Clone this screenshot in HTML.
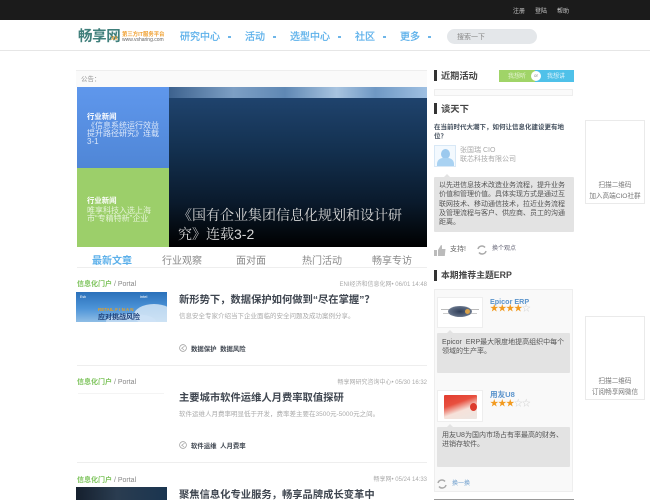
<!DOCTYPE html>
<html lang="zh">
<head>
<meta charset="utf-8">
<style>
html,body{margin:0;padding:0;background:#fff}
body{width:650px;height:500px;overflow:hidden;position:relative;font-family:"Liberation Sans","Noto Sans CJK SC",sans-serif;color:#444}
#w{position:absolute;left:0;top:0;width:650px;height:500px;overflow:hidden;filter:blur(.3px)}
.a,.t{position:absolute}
.t{white-space:nowrap;line-height:1}
.h{background:#333;width:3px;height:11px;position:absolute}
.nav{color:#5cb0ea;font-size:10px;font-weight:400;-webkit-text-stroke:.25px #5cb0ea}
.dot{position:absolute;width:3px;height:2px;background:#6db5e8;top:36px}
.tab{font-size:10px;color:#8a8a8a;top:257px}
.cat{font-size:7px;color:#7cc35a;font-weight:700}
.cat span{color:#888;font-weight:400}
.src{font-size:6px;color:#aaa;text-align:right;right:223px}
.ttl{font-size:10.3px;font-weight:700;color:#3f4650}
.sub{font-size:6.5px;color:#aaa}
.tag{font-size:6.4px;color:#3f4650;font-weight:700}
.ln{position:absolute;left:77px;width:350px;height:1px;background:#eee}
.qr{position:absolute;left:585px;width:58px;height:82px;border:1px solid #eaeaea;background:#fff;box-sizing:content-box}
.gr{position:absolute;background:#e3e3e3;border-radius:1px}
.p{font-size:7px;line-height:9.3px;color:#555;position:absolute;white-space:nowrap}
.q{left:585px;width:60px;text-align:center;font-size:6.6px;color:#777}
.s{font-size:8.5px;letter-spacing:-.5px;color:#f29a1f}
</style>
</head>
<body>
<div id="w">
<div class="a" style="left:0;top:0;width:650px;height:20px;background:#1b1b1b"></div>
<div class="a" style="left:0;top:50px;width:650px;height:1px;background:#e6e6e6"></div>
<div class="t" style="left:513px;top:8.5px;font-size:6px;color:#ccc">注册</div>
<div class="t" style="left:535px;top:8.5px;font-size:6px;color:#ccc">登陆</div>
<div class="t" style="left:557px;top:8.5px;font-size:6px;color:#ccc">帮助</div>

<div class="t" style="left:78px;top:29.5px;font-size:14.5px;color:#3f7f7b;font-weight:700;letter-spacing:-.4px">畅享网</div>
<div class="t" style="left:111px;top:37px;font-size:5px;color:#f0a030;font-weight:700">XX</div>
<div class="t" style="left:122px;top:32.5px;font-size:5.4px;color:#f0a030;font-weight:700">第三方IT服务平台</div>
<div class="t" style="left:122px;top:38px;font-size:5px;color:#666">www.vsharing.com</div>

<div class="t nav" style="left:180px;top:33px">研究中心</div><div class="dot" style="left:228px"></div>
<div class="t nav" style="left:245px;top:33px">活动</div><div class="dot" style="left:273px"></div>
<div class="t nav" style="left:290px;top:33px">选型中心</div><div class="dot" style="left:338px"></div>
<div class="t nav" style="left:355px;top:33px">社区</div><div class="dot" style="left:383px"></div>
<div class="t nav" style="left:400px;top:33px">更多</div><div class="dot" style="left:428px"></div>
<div class="a" style="left:447px;top:29px;width:90px;height:15px;border-radius:8px;background:#e4e7ea"></div>
<div class="t" style="left:457px;top:34px;font-size:7px;color:#888">搜索一下</div>

<div class="a" style="left:76px;top:70px;width:351px;height:17px;background:#fafafa;border-top:1px solid #eee;box-sizing:border-box"></div>
<div class="t" style="left:81px;top:77px;font-size:6.5px;color:#999">公告：</div>

<div class="a" style="left:77px;top:87px;width:92px;height:81px;background:linear-gradient(#5f97ec,#4f86d6)"></div>
<div class="a" style="left:77px;top:168px;width:92px;height:79px;background:#9ccf6a"></div>
<div class="t" style="left:87px;top:113px;font-size:7.4px;color:#fff;font-weight:700">行业新闻</div>
<div class="t" style="left:87px;top:121.5px;font-size:8px;line-height:8px;color:#dce8fa;white-space:nowrap">《信息系统运行效益<br>提升路径研究》连载<br>3-1</div>
<div class="t" style="left:87px;top:197px;font-size:7.4px;color:#fff;font-weight:700">行业新闻</div>
<div class="t" style="left:87px;top:206.5px;font-size:8px;line-height:8px;color:#e6f4d8;white-space:nowrap">唯享科技入选上海<br>市“专精特新”企业</div>

<div class="a" style="left:169px;top:87px;width:258px;height:11px;background:linear-gradient(90deg,#3d628e,#7d9fc4 25%,#5f88b4 45%,#a8c4e0 65%,#6f98c4 80%,#9fc0e2)"></div>
<div class="a" style="left:169px;top:98px;width:258px;height:149px;background:linear-gradient(#1f436d,#13304f 35%,#0a1a2c 70%,#000)"></div>
<div class="t" style="left:178px;top:205.5px;width:236px;white-space:normal;font-size:14px;line-height:19px;color:#d8d8d8;font-family:'Liberation Sans','Noto Serif CJK SC',serif">《国有企业集团信息化规划和设计研究》连载3-2</div>

<div class="t tab" style="left:92px;color:#5cb0ea;font-weight:700">最新文章</div>
<div class="t tab" style="left:162px">行业观察</div>
<div class="t tab" style="left:236px">面对面</div>
<div class="t tab" style="left:302px">热门活动</div>
<div class="t tab" style="left:372px">畅享专访</div>
<div class="ln" style="top:267px"></div>

<div class="t cat" style="left:77px;top:281px">信息化门户 <span>/ Portal</span></div>
<div class="t src" style="top:282px">ENI经济和信息化网• 06/01 14:48</div>
<div class="a" style="left:76px;top:292px;width:91px;height:30px;overflow:hidden;background:linear-gradient(#2a70ba,#4d94d8 55%,#8fbde6)">
  <div class="a" style="left:58px;top:12px;width:40px;height:22px;border-radius:50%;background:#dcebf8;opacity:.8"></div>
  <div class="a" style="left:30px;top:22px;width:50px;height:14px;border-radius:50%;background:#cfe3f6;opacity:.7"></div>
  <div class="t" style="left:4px;top:4px;font-size:3.5px;color:#fff">Esb</div>
  <div class="t" style="left:64px;top:3px;font-size:4px;color:#fff">intel</div>
  <div class="t" style="left:22px;top:16px;font-size:4.5px;color:#e8a020;font-weight:700">RETAIL F I N A N</div>
  <div class="t" style="left:22px;top:22px;font-size:7px;color:#1d3f78;font-weight:700">应对挑战风险</div>
</div>
<div class="t ttl" style="left:179px;top:296px">新形势下，数据保护如何做到“尽在掌握”？</div>
<div class="t sub" style="left:179px;top:314px">信息安全专家介绍当下企业面临的安全问题及成功案例分享。</div>
<svg class="a" style="left:179px;top:343.5px" width="8" height="8" viewBox="0 0 8 8"><circle cx="4" cy="4" r="3.4" fill="none" stroke="#999" stroke-width=".7"/><path d="M5.5 2.2 2.6 4.2 5 5.8" fill="none" stroke="#999" stroke-width=".6"/></svg>
<div class="t tag" style="left:191px;top:346.5px">数据保护&nbsp;&nbsp;数据风险</div>
<div class="ln" style="top:365px"></div>

<div class="t cat" style="left:77px;top:379px">信息化门户 <span>/ Portal</span></div>
<div class="t src" style="top:379.5px">畅享网研究咨询中心• 05/30 16:32</div>
<div class="a" style="left:78px;top:393px;width:86px;height:1px;background:#f4f4f4"></div>
<div class="t ttl" style="left:179px;top:394px">主要城市软件运维人月费率取值探研</div>
<div class="t sub" style="left:179px;top:412px">软件运维人月费率明显低于开发，费率差主要在3500元-5000元之间。</div>
<svg class="a" style="left:179px;top:441px" width="8" height="8" viewBox="0 0 8 8"><circle cx="4" cy="4" r="3.4" fill="none" stroke="#999" stroke-width=".7"/><path d="M5.5 2.2 2.6 4.2 5 5.8" fill="none" stroke="#999" stroke-width=".6"/></svg>
<div class="t tag" style="left:191px;top:444px">软件运维&nbsp;&nbsp;人月费率</div>
<div class="ln" style="top:462px"></div>

<div class="t cat" style="left:77px;top:477px">信息化门户 <span>/ Portal</span></div>
<div class="t src" style="top:477px">畅享网• 05/24 14:33</div>
<div class="a" style="left:76px;top:487px;width:91px;height:13px;background:linear-gradient(90deg,#15202e,#2a3c50 45%,#1a3550)"></div>
<div class="t ttl" style="left:179px;top:491px">聚焦信息化专业服务，畅享品牌成长变革中</div>

<!-- sidebar -->
<div class="h" style="left:434px;top:70px"></div>
<div class="t" style="left:441px;top:72px;font-size:9.2px;font-weight:700;color:#444">近期活动</div>
<div class="a" style="left:499px;top:70px;width:36px;height:12px;background:#a0d468"></div>
<div class="a" style="left:535px;top:70px;width:39px;height:12px;background:#4fc1e9"></div>
<div class="a" style="left:531px;top:71px;width:10px;height:10px;border-radius:50%;background:#fff"></div>
<div class="t" style="left:534px;top:74px;font-size:4.5px;color:#888">or</div>
<div class="t" style="left:508px;top:74px;font-size:6px;color:#e4f3d2">我想听</div>
<div class="t" style="left:547px;top:74px;font-size:6px;color:#dff3fb">我想讲</div>
<div class="a" style="left:434px;top:89px;width:139px;height:7px;background:#fafafa;border:1px solid #eee;box-sizing:border-box"></div>

<div class="h" style="left:434px;top:103px"></div>
<div class="t" style="left:441px;top:105px;font-size:9.3px;font-weight:700;color:#444">谈天下</div>
<div class="t" style="left:434px;top:122.5px;font-size:6.5px;line-height:9px;font-weight:700;color:#44505e">在当前时代大潮下，如何让信息化建设更有地<br>位？</div>
<div class="a" style="left:434px;top:145px;width:22px;height:22px;border:1px solid #d8e8f6;box-sizing:border-box;background:#f3f9fe;overflow:hidden">
  <div class="a" style="left:6px;top:3px;width:9px;height:10px;border-radius:50%;background:#9cc9ee"></div>
  <div class="a" style="left:2px;top:12px;width:17px;height:9px;border-radius:6px 6px 0 0;background:#a9d2f2"></div>
</div>
<div class="t" style="left:460px;top:147px;font-size:7px;color:#aaa">张国瑞 CIO</div>
<div class="t" style="left:460px;top:156px;font-size:7px;color:#aaa">联芯科技有限公司</div>
<div class="gr" style="left:434px;top:177px;width:140px;height:55px"></div>
<div class="a" style="left:444px;top:174px;border-left:3px solid transparent;border-right:3px solid transparent;border-bottom:3px solid #e3e3e3"></div>
<div class="p" style="left:439px;top:181px">以先进信息技术改造业务流程，提升业务<br>价值和管理价值。具体实现方式是通过互<br>联网技术、移动通信技术，拉近业务流程<br>及管理流程与客户、供应商、员工的沟通<br>距离。</div>
<svg class="a" style="left:434px;top:244px" width="12" height="12" viewBox="0 0 12 12"><path d="M0 6h3v6H0zM4 6l3-5 1 .5V5h3.5l-.7 7H4z" fill="#bbb"/></svg>
<div class="t" style="left:450px;top:246px;font-size:7px;color:#666">支持!</div>
<svg class="a" style="left:477px;top:244.5px" width="10" height="10" viewBox="0 0 10 10"><path d="M1 4a4 4 0 0 1 7-1.5M9 6a4 4 0 0 1-7 1.5" fill="none" stroke="#aaa" stroke-width="1.500"/></svg>
<div class="t" style="left:492px;top:246px;font-size:6px;color:#667">换个观点</div>

<div class="h" style="left:434px;top:270px"></div>
<div class="t" style="left:441px;top:271px;font-size:8.8px;font-weight:700;color:#444">本期推荐主题ERP</div>
<div class="a" style="left:434px;top:289px;width:139px;height:203px;background:#f9f9f9;border:1px solid #eee;box-sizing:border-box"></div>

<div class="a" style="left:437px;top:297px;width:46px;height:31px;background:#fff;border:1px solid #eee;box-sizing:border-box"></div>
<div class="a" style="left:441px;top:309px;width:38px;height:1px;background:#bbb"></div>
<div class="a" style="left:443px;top:313px;width:34px;height:1px;background:#ccc"></div>
<div class="a" style="left:448px;top:306px;width:24px;height:11px;border-radius:50%;background:radial-gradient(#2f3e58,#5d6b82 60%,#b8bec8)"></div>
<div class="a" style="left:465px;top:309px;width:5px;height:5px;border-radius:50%;background:#d9a24a"></div>
<div class="t" style="left:490px;top:297.5px;font-size:7.2px;font-weight:700;color:#5b94cc">Epicor ERP</div>
<div class="t s" style="left:490px;top:304px">★★★★<span style="color:#ccc">☆</span></div>
<div class="gr" style="left:437px;top:333px;width:133px;height:40px"></div>
<div class="a" style="left:447px;top:330px;border-left:3px solid transparent;border-right:3px solid transparent;border-bottom:3px solid #e3e3e3"></div>
<div class="p" style="left:442px;top:337.5px">Epicor&nbsp; ERP最大限度地提高组织中每个<br>领域的生产率。</div>

<div class="a" style="left:437px;top:390px;width:46px;height:32px;background:#fff;border:1px solid #eee;box-sizing:border-box"></div>
<div class="a" style="left:444px;top:395px;width:33px;height:24px;background:linear-gradient(160deg,#e23b2e,#e8503f 35%,#f6e2da 62%,#ece6e2);border-radius:1px"></div>
<div class="a" style="left:470px;top:403px;width:7px;height:8px;border-radius:50%;background:#dd3a2c"></div>
<div class="t" style="left:490px;top:390.5px;font-size:7.6px;font-weight:700;color:#5b94cc">用友U8</div>
<div class="t s" style="left:490px;top:398.5px">★★★<span style="color:#ccc">☆☆</span></div>
<div class="gr" style="left:437px;top:427px;width:133px;height:40px"></div>
<div class="a" style="left:447px;top:424px;border-left:3px solid transparent;border-right:3px solid transparent;border-bottom:3px solid #e3e3e3"></div>
<div class="p" style="left:442px;top:431px">用友U8为国内市场占有率最高的财务、<br>进销存软件。</div>
<svg class="a" style="left:437px;top:479px" width="10" height="10" viewBox="0 0 10 10"><path d="M1 4a4 4 0 0 1 7-1.5M9 6a4 4 0 0 1-7 1.5" fill="none" stroke="#aaa" stroke-width="1.500"/></svg>
<div class="t" style="left:452px;top:481px;font-size:6px;color:#6a9ccc">换一换</div>
<div class="a" style="left:434px;top:499px;width:140px;height:1px;background:#999"></div>

<div class="qr" style="top:120px"></div>
<div class="t q" style="top:183px">扫描二维码</div>
<div class="t q" style="top:194px">加入高端CIO社群</div>
<div class="qr" style="top:316px"></div>
<div class="t q" style="top:379px">扫描二维码</div>
<div class="t q" style="top:390px">订阅畅享网微信</div>
</div>
</body>
</html>
